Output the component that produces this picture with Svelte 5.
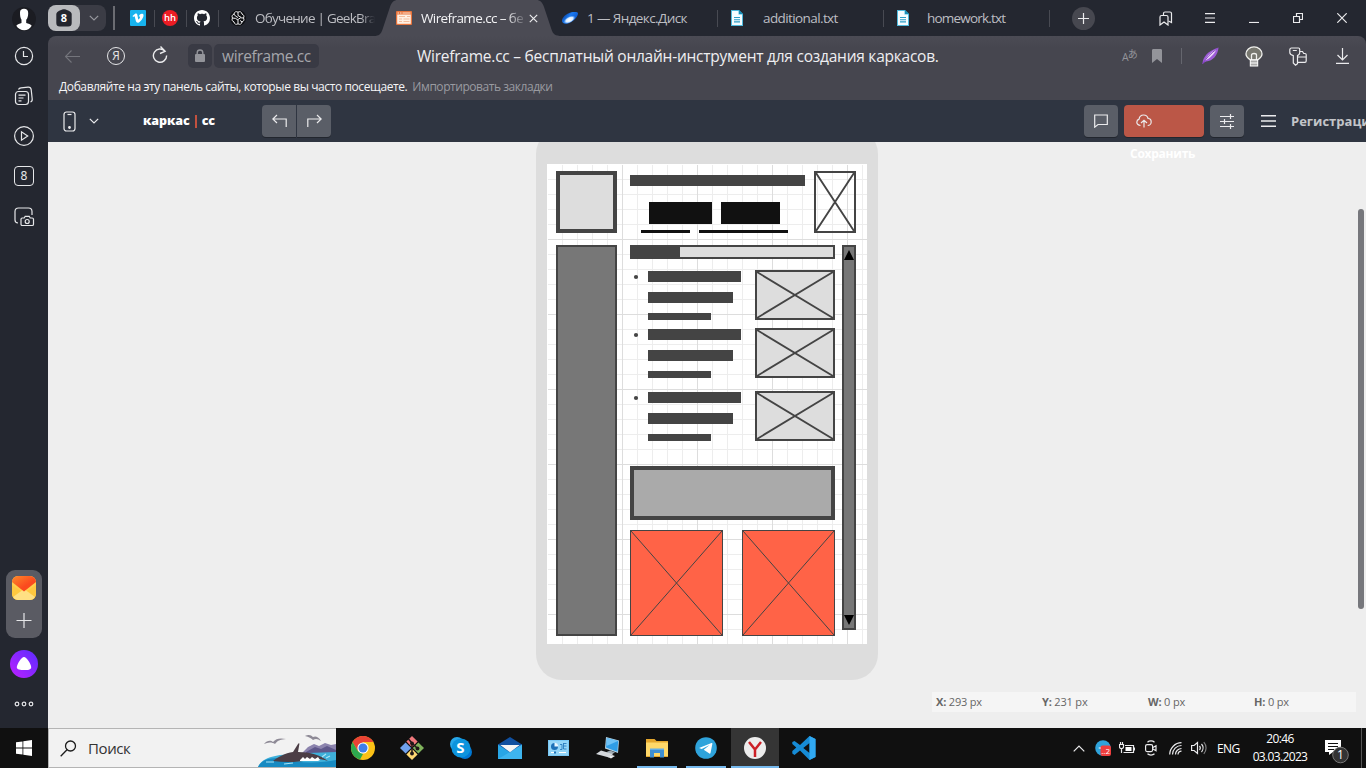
<script>
  const items = [0, 58, 121];
  const coords = [['X:', '293 px'], ['Y:', '231 px'], ['W:', '0 px'], ['H:', '0 px']];
</script>

{#snippet doc()}
  <svg class="doc" width="12" height="16" viewBox="0 0 12 16"><path d="M0 0h8l4 4v12H0z" fill="#4fb9dc"/><path d="M1 1h6.5v3.5H11V15H1z" fill="#f4fcff"/><path d="M8 0v4h4z" fill="#178eb8"/><path d="M3 7.5h6M3 9.7h6M3 11.9h6" stroke="#2a9cc6" stroke-width="1.1"/></svg>
{/snippet}

{#snippet crossed(x, y, w, h, fill, sw)}
  <rect x={x + sw / 2} y={y + sw / 2} width={w - sw} height={h - sw} {fill} stroke="#444" stroke-width={sw} />
  <path d={`M${x + sw} ${y + sw}L${x + w - sw} ${y + h - sw}M${x + w - sw} ${y + sw}L${x + sw} ${y + h - sw}`} stroke="#444" stroke-width={sw === 1 ? 1 : 1.9} />
{/snippet}

<div class="screen">
  <aside class="side">
    <svg class="avatar" width="24" height="24" viewBox="0 0 24 24"><circle cx="12" cy="12" r="12" fill="#1b1c22"/><path d="M8 5.500C8 2.800 9.500 1.700 12 1.700s4.200 1.300 4.200 4.200c0 3.200-.7 5.500-2 6.800v3.300c2 1 4.500 1 5.500 2.700-1.800 3-4.500 4.500-7.500 4.500S6 21.500 4.300 18.700c1-1.700 3.700-1.700 5.200-2.700v-3.300C8.300 11 8 8.500 8 5.500z" fill="#fff"/></svg>
    <svg class="s-clock" width="20" height="20" viewBox="0 0 20 20"><circle cx="10" cy="10" r="8.600"/><path d="M9.500 5v5.500H14"/></svg>
    <svg class="s-news" width="20" height="20" viewBox="0 0 20 20"><rect x="1.500" y="5.500" width="13" height="13" rx="3"/><path d="M4.500 3.500C5 2.300 6 2 7 1.900l7-.8c2-.2 3 .9 3.200 2.500l1 9.400c.2 1.500-.5 2.600-1.700 3M4.500 9.200h7M4.500 12h5M4.500 14.800h3"/></svg>
    <svg class="s-play" width="22" height="22" viewBox="0 0 22 22"><circle cx="11" cy="11" r="9.400"/><path d="M8.500 6.800v8.400l6.200-4.200z"/></svg>
    <div class="s-eight">8</div>
    <svg class="s-shot" width="22" height="22" viewBox="0 0 22 22"><path d="M5 17c-2-.1-3-1.200-3-3V5.500C2 3.200 3.200 2 5.500 2h10C17.800 2 19 3.200 19 5.500V9"/><path d="M8 13.200c0-.8.5-1.200 1.200-1.200h2l1-1.700h4l1 1.700h2c.8 0 1.300.4 1.300 1.200v5c0 .9-.5 1.300-1.300 1.300h-10c-.8 0-1.200-.4-1.200-1.300z"/><circle cx="14.200" cy="15.500" r="2"/></svg>
    <div class="mailpill">
      <svg width="24" height="24" viewBox="0 0 24 24" class="plain"><defs><linearGradient id="ml" x1="0" y1="0" x2="1" y2="1"><stop offset="0" stop-color="#ff8a2a"/><stop offset=".6" stop-color="#fb4a1e"/></linearGradient></defs><rect width="24" height="24" rx="6" fill="#ffcf4d"/><path d="M0 9l12 8 12-8v9a6 6 0 0 1-6 6H6a6 6 0 0 1-6-6z" fill="#ffc83f"/><path d="M1 21l11-8 11 8a6 6 0 0 1-5 3H6a6 6 0 0 1-5-3z" fill="#ffe083"/><path d="M0 6a6 6 0 0 1 6-6h12a6 6 0 0 1 6 6L12 15.500z" fill="url(#ml)"/></svg>
      <svg class="add" width="16" height="16" viewBox="0 0 16 16"><path d="M.500 8.500h15M8 1v15"/></svg>
    </div>
    <svg class="s-alice" width="28" height="28" viewBox="0 0 28 28"><defs><linearGradient id="al" x1="0" y1="1" x2="1" y2="0"><stop offset="0" stop-color="#bd20ff"/><stop offset="1" stop-color="#5a2cff"/></linearGradient></defs><circle cx="14" cy="14" r="14" fill="url(#al)" stroke="none"/><path d="M14 7c2.600 0 7.200 7.500 7.200 10.200S17.500 20 14 20s-7.200-.2-7.200-2.800S11.400 7 14 7z" fill="#fff" stroke="none"/></svg>
    <svg class="s-dots" width="20" height="6" viewBox="0 0 20 6"><circle cx="3" cy="3" r="1.800"/><circle cx="10" cy="3" r="1.800"/><circle cx="17" cy="3" r="1.800"/></svg>
  </aside>

  <div class="main">
    <div class="tabs">
      <div class="group"><div class="shield"><svg width="18" height="18" viewBox="0 0 18 18"><path d="M9 .300c2.500 0 7.700 2.700 7.700 4.700v9a3.500 3.500 0 0 1-3.500 3.500H4.800A3.500 3.500 0 0 1 1.300 14V5C1.300 3 6.500.300 9 .300z" fill="#24262e"/></svg><b>8</b></div><svg width="10" height="6" viewBox="0 0 10 6" class="line dim"><path d="M.800 .800L5 5 9.200.800"/></svg></div>
      <i class="div tall"></i>
      <svg class="vimeo" width="16" height="16" viewBox="0 0 16 16"><rect width="16" height="16" rx="1" fill="#17b3ee"/><path d="M2.500 6l2.600-2.200c1.200-.8 2-.2 2.300 1.100l.7 3.800c.3.900.7.900 1.200.1.700-1.100 1.100-2 .4-2.300-.3-.1-.7 0-1 .2.600-2.200 1.900-3.200 3.500-3 1.500.2 1.600 1.700 1 3.300-.8 2.200-3.300 5.200-4.800 5.700-1.200.4-2.200-.4-2.600-1.900L4.900 7.200c-.2-.8-.5-1.100-1-.8l-.8.500z" fill="#fff"/></svg>
      <i class="div"></i>
      <div class="hh">hh</div>
      <i class="div"></i>
      <svg class="gh" width="16" height="16" viewBox="0 0 16 16"><path fill="#fff" d="M8 0C3.580 0 0 3.580 0 8c0 3.540 2.290 6.530 5.470 7.590.4.070.55-.17.55-.38 0-.19-.01-.82-.01-1.490-2.010.37-2.530-.49-2.690-.94-.09-.23-.48-.94-.82-1.130-.28-.15-.68-.52-.01-.53.63-.01 1.080.58 1.230.82.72 1.210 1.870.87 2.330.66.070-.52.280-.87.510-1.070-1.780-.2-3.640-.89-3.640-3.950 0-.87.310-1.590.820-2.150-.08-.2-.36-1.020.08-2.120 0 0 .67-.21 2.200.82.640-.18 1.320-.27 2-.27s1.360.09 2 .27c1.530-1.040 2.200-.82 2.200-.82.440 1.100.16 1.920.08 2.120.51.56.82 1.270.82 2.150 0 3.070-1.870 3.750-3.650 3.950.29.25.54.73.54 1.480 0 1.070-.01 1.930-.01 2.200 0 .21.150.46.550.38A8.010 8.010 0 0 0 16 8c0-4.420-3.580-8-8-8z"/></svg>
      <i class="div"></i>
      <svg class="gpt" width="16" height="16" viewBox="0 0 16 16" fill="none" stroke="#f0f0f2" stroke-width="1"><circle cx="8" cy="8" r="8" fill="#0c0d10" stroke="none"/><path d="M8 2.200c1.600-1.200 4-.2 4 1.900 1.800.5 2.500 2.400 1.500 3.900 1 1.500.3 3.400-1.500 3.900 0 2.100-2.400 3.100-4 1.900-1.600 1.200-4 .2-4-1.900-1.800-.5-2.500-2.400-1.500-3.900-1-1.500-.3-3.400 1.500-3.900 0-2.100 2.400-3.100 4-1.900zM8 2.200v3.300l3 1.800M4 4.100l1.500 2L8 7.500M13.500 8l-3-.200L8 9.500M2.500 8l3 .400L8 10v3.800M12 11.900l-2-1.500"/></svg>
      <span class="t t-gb">Обучение | GeekBrains</span>
      <div class="active">
        <svg class="shape" width="188" height="36" viewBox="0 0 188 36"><path d="M0 36c5 0 7-2 8.500-6.500L16 7C17.700 2.200 19.500 0 24 0h138c4.500 0 6.300 2.200 8 7l7.500 22.500C179 34 181 36 188 36z" fill="#4b4b54"/></svg>
        <svg class="wf" width="16" height="14" viewBox="0 0 16 14"><rect width="16" height="14" rx="1" fill="#e8743c"/><path d="M1.200 3.500h13.600v9.300H1.200z" fill="#fff1e4"/><path d="M1.500 2h1.500M4 2h1.500M6.500 2h8" stroke="#ffe3d0" stroke-width="1.200"/><path d="M3 5.500h6M3 8h3M3 10.500h3M7.500 8h6M7.500 10.500h6M11 5.500h3" stroke="#f4bd9c" stroke-width="1"/></svg>
        <span class="t t-wf">Wireframe.cc – бесплатный</span>
        <svg class="line" width="9" height="9" viewBox="0 0 9 9"><path d="M.800 .800l7.400 7.400M8.200.800L.800 8.200"/></svg>
      </div>
      <svg class="disk" width="18" height="14" viewBox="0 0 18 14"><defs><linearGradient id="dk" x1="0" y1="0" x2="1" y2=".6"><stop offset="0" stop-color="#04256f"/><stop offset=".5" stop-color="#1c7af0"/><stop offset="1" stop-color="#0a52c8"/></linearGradient><radialGradient id="dw"><stop offset="0" stop-color="#fff"/><stop offset=".6" stop-color="#d8ebff"/><stop offset="1" stop-color="#6db4ff" stop-opacity="0"/></radialGradient></defs><path d="M1 9C2 5 7 1.500 12 1c3-.3 5 0 5 1.500 0 3.500-5 8.500-10 10C3.500 13.500.500 12 1 9z" fill="url(#dk)"/><ellipse cx="8.500" cy="8.700" rx="6.500" ry="3.200" fill="url(#dw)" transform="rotate(-28 8.500 8.700)"/></svg>
      <span class="t t-disk">1 — Яндекс.Диск</span>
      <i class="div d1"></i>{@render doc()}<span class="t t-add">additional.txt</span>
      <i class="div"></i>{@render doc()}<span class="t t-home">homework.txt</span>
      <i class="div"></i>
      <div class="plus"><svg class="line" width="11" height="11" viewBox="0 0 11 11"><path d="M0 5.500h11M5.500 0v11"/></svg></div>
      <svg class="line w1" width="14" height="15" viewBox="0 0 14 15"><path d="M1 6C1 5 1.500 4.500 2.500 4.500h5C8.500 4.500 9 5 9 6v8l-4-3-4 3z"/><path d="M4.500 4v-1.500C4.500 1.500 5 1 6 1h5c1 0 1.500.5 1.500 1.500V11.500l-3-1.500"/></svg>
      <svg class="line w2" width="10" height="10" viewBox="0 0 10 10"><path d="M0 .600h10M0 5h10M0 9.400h10"/></svg>
      <svg class="line w3" width="10" height="10" viewBox="0 0 10 10"><path d="M0 9.500h10"/></svg>
      <svg class="line w4" width="10" height="10" viewBox="0 0 10 10"><path d="M.500 3.500h6v6h-6zM3.500 3.500v-3h6v6h-3"/></svg>
      <svg class="line w5" width="10" height="10" viewBox="0 0 10 10"><path d="M.300.300l9.400 9.400M9.700.300L.300 9.700"/></svg>
    </div>

    <div class="bar">
      <svg class="b-back" width="15" height="13" viewBox="0 0 15 13"><path d="M6.500.500l-6 6 6 6M.500 6.500H15"/></svg>
      <div class="ya">Я</div>
      <svg class="line b-re" width="16" height="18" viewBox="0 0 16 18"><path d="M13 5.300A6.600 6.600 0 1 0 14.600 9.500M8.500.500l4.600 4.800L8 7.500" stroke-width="1.400"/></svg>
      <div class="lock"><svg width="10" height="14" viewBox="0 0 10 14"><rect y="5" width="10" height="8" rx="1" fill="#93949a"/><path d="M2.200 5.500V3.800a2.800 2.800 0 0 1 5.600 0v1.700" fill="none" stroke="#93949a" stroke-width="1.400"/></svg></div>
      <div class="url"><span>wireframe.cc</span></div>
      <div class="ptitle"><span>Wireframe.cc – бесплатный онлайн-инструмент для создания каркасов.</span></div>
      <div class="trans"><span>A</span><sup>あ</sup></div>
      <svg class="b-mark" width="10" height="14" viewBox="0 0 10 14"><path d="M0 1.500C0 .500.500 0 1.500 0h7c1 0 1.500.500 1.500 1.500V14L5 10l-5 4z" fill="#93949a"/></svg>
      <i class="div"></i>
      <svg class="b-fea" width="17" height="18" viewBox="0 0 17 18"><path d="M.500 16.500C1 10 5 4.500 16.500.500 16 8 11 14 4 14.500z" fill="#9c5bd6"/><path d="M2.500 13.500C5.500 8 10 4 15 2 12 7 8 12 2.500 13.500z" fill="#ead7f7"/><path d="M.500 17C4 11 9 6 15.500 1.500" stroke="#8440c4" fill="none"/></svg>
      <svg class="b-bulb" width="18" height="21" viewBox="0 0 18 21"><path d="M5.500 14C2.500 12 1 10.500 1 8a8 7.200 0 0 1 16 0c0 2.500-1.500 4-4.500 6z" fill="#77776f" stroke="#f1f1ee" stroke-width="1.300"/><path d="M6.500 15V9c0-2 5-2 5 0v6" fill="none" stroke="#f1f1ee" stroke-width="1.300"/><rect x="5.300" y="14" width="7.400" height="6" fill="#aaa" stroke="#fff"/><path d="M5 17h8" stroke="#fff"/></svg>
      <svg class="line b-key" width="18" height="19" viewBox="0 0 18 19"><path d="M2.500 1h7c.8 0 1.200.500 1.200 1.200V6c0 1.300-1 2-2.200 2.600v8l-2 1.600L4.300 16V8.600C2 8 .800 7 .800 5.500V3c0-1.200.6-2 1.700-2zM3.800 3.500h4M11 4.500h2.500l1.200 2h1.300c.8 0 1.200.5 1.200 1.200V14c0 .8-.5 1.300-1.300 1.300H9M9 10h8"/></svg>
      <svg class="line b-dl" width="13" height="16" viewBox="0 0 13 16"><path d="M6.500 0v12M1.500 7l5 5 5-5M0 15.300h13"/></svg>
    </div>

    <div class="marks"><span class="m1">Добавляйте на эту панель сайты, которые вы часто посещаете.</span><span class="m2">Импортировать закладки</span></div>

    <div class="app">
      <svg class="line a-ph" width="13" height="21" viewBox="0 0 13 21"><rect x="1" y="1" width="11" height="19" rx="2.500"/><path d="M4.500 3.500h4"/><circle cx="6.500" cy="16.500" r=".8" fill="#e4e5e7"/></svg>
      <svg class="line a-ch" width="10" height="6" viewBox="0 0 10 6"><path d="M.800.800L5 5 9.200.800"/></svg>
      <div class="logo"><span>каркас</span><i></i><span>cc</span></div>
      <div class="undo">
        <button aria-label="Undo"><svg class="line" width="15" height="14" viewBox="0 0 15 14"><path d="M5 1L.800 5 5 9M.800 5h13.400v8"/></svg></button>
        <button aria-label="Redo"><svg class="line" width="15" height="14" viewBox="0 0 15 14"><path d="M10 1l4.200 4L10 9M14.200 5H.800v8"/></svg></button>
      </div>
      <button class="sq c" aria-label="Comments"><svg class="line" width="14" height="14" viewBox="0 0 14 14"><path d="M.700 1h12.600v9.500H4L.700 13.200z"/></svg></button>
      <button class="save"><svg class="line" width="16" height="14" viewBox="0 0 16 14"><path d="M4.500 11.500C2.500 11.500.800 10 .800 8.200c0-1.500 1-2.700 2.300-3.100C3.400 2.700 5.200 1 7.600 1c2.200 0 4 1.500 4.500 3.500 1.900.1 3.100 1.500 3.100 3.400s-1.500 3.600-3.500 3.600M8 13.500V6.500M5 9l3-2.800L11 9"/></svg><span>Сохранить</span></button>
      <button class="sq s" aria-label="Settings"><svg class="line" width="14" height="15" viewBox="0 0 14 15"><path d="M0 2.500h14M0 7.500h14M0 12.500h14M10.500 0v5M4.500 5v5M10.500 10v5"/></svg></button>
      <svg class="line a-mn" width="15" height="12" viewBox="0 0 15 12"><path d="M0 .800h15M0 6h15M0 11.200h15" stroke-width="1.500"/></svg>
      <span class="reg">Регистрация</span>
    </div>

    <div class="work">
      <div class="device">
        <svg class="paper" width="320" height="480" viewBox="0 0 320 480" fill="none">
          {#each items as dy}
            <circle cx="89" cy={113 + dy} r="2.100" fill="#444" />
            <path d={`M101 ${107 + dy}h93v11h-93zM101 ${128 + dy}h85v11h-85zM101 ${149 + dy}h63v7h-63z`} fill="#444" />
            {@render crossed(208, 106 + dy, 80, 50, '#ddd', 2)}
          {/each}
          <rect x="11" y="9" width="57" height="58" fill="#ddd" stroke="#444" stroke-width="4" />
          <rect x="83" y="11" width="175" height="11" fill="#444" />
          <path d="M102 38h63v22h-63zM174 38h59v22h-59zM94 66h49v3H94zM152 66h89v3h-89z" fill="#111" />
          {@render crossed(267, 7, 42, 62, 'none', 2)}
          <rect x="10" y="82" width="59" height="389" fill="#777" stroke="#444" stroke-width="2" />
          <rect x="84" y="82" width="203" height="12" fill="#ddd" stroke="#444" stroke-width="2" />
          <rect x="83" y="81" width="50" height="14" fill="#444" />
          <rect x="296" y="82" width="12" height="383" fill="#777" stroke="#444" stroke-width="2" />
          <path d="M302 86l5 10h-10zM302 461l5-10h-10z" fill="#000" />
          <rect x="85" y="304" width="201" height="50" fill="#aaa" stroke="#444" stroke-width="4" />
          {@render crossed(83, 366, 93, 106, '#ff6347', 1)}
          {@render crossed(195, 366, 93, 106, '#ff6347', 1)}
        </svg>
      </div>
      <div class="coords">{#each coords as [k, v]}<span><b>{k}</b> {v}</span>{/each}</div>
      <i class="thumb"></i>
    </div>
  </div>

  <footer class="task">
    <div class="start"><svg width="16" height="16" viewBox="0 0 16 16" fill="#fff"><path d="M0 2.300l6.500-.9v6.200H0zM7.300 1.300L16 0v7.600H7.300zM0 8.400h6.500v6.200L0 13.700zM7.300 8.400H16V16l-8.700-1.300z"/></svg></div>
    <div class="search">
      <svg width="17" height="17" viewBox="0 0 17 17" fill="none" stroke="#1c1c1c" stroke-width="1.300"><circle cx="10.500" cy="6" r="5"/><path d="M7 9.800L.700 16.300"/></svg>
      <span>Поиск</span>
      <svg class="whale" width="78" height="38" viewBox="0 0 78 38"><path d="M44 24l6-6 6-3 5 2 6-3 6 2 5-1v12H44z" fill="#8b83ad"/><path d="M48 23l9-5 6 2 6-3 9 4v7H48z" fill="#5e578a"/><path d="M0 38c3-7 10-10 22-12l28-2 28-1v15z" fill="#3fb0da"/><path d="M0 38c4-8 12-9 22-9 20 6 40 5 56 2v7z" fill="#178ac2"/><path d="M15 32c5-4 12-8 20-9l5-8c.8-1.200 1.600-.7 1.300.5L40 23c12 0 22 3 30 9-10-3-12-2-17-1-13 2-25 3-38 1z" fill="#4b3d45"/><path d="M42 31l3-3 2 2 2-2 3 2 2-2 3 2 3-2 2 3-2 1H42z" fill="#fff"/><path d="M6 15c3-4 7-4 9-2 3-4 8-4 13-3-5 .6-8 1-11 5-3-2-7-2-11 0zM47 7c4-2 6-1 8 1 2-1 5-1 8 4-3-2-5-3-8-1-2-2-4-3-8-4z" fill="#8e8a96"/><path d="M8 33h8M64 28l4-3M68 29l4-2M26 35l9-1" stroke="#a9e4f5" stroke-width="1.200"/></svg>
    </div>
    <nav class="apps">
      <div><svg width="24" height="24" viewBox="0 0 24 24"><circle cx="12" cy="12" r="12" fill="#fbc116"/><path d="M1.600 6A12 12 0 0 1 22.400 6H12L6.800 15z" fill="#ea4335"/><path d="M1.600 6l5.200 9 5.200 3-3 5.600A12 12 0 0 1 1.600 6z" fill="#2da94f"/><circle cx="12" cy="12" r="5.600" fill="#fff"/><circle cx="12" cy="12" r="4.500" fill="#3f7ee8"/></svg></div>
      <div><svg width="24" height="24" viewBox="0 0 24 24"><path d="M12 0l5.600 5.600L12 11.200 6.400 5.600z" fill="#f0797d"/><path d="M18.400 6.400L24 12l-5.600 5.600-5.600-5.600z" fill="#80b35c"/><path d="M12 12.800l5.600 5.600L12 24l-5.600-5.600z" fill="#ffd873"/><path d="M5.600 6.400l5.600 5.600-5.600 5.600L0 12z" fill="#70a1ee"/><path d="M8.500 3l3.500 4v11M12 7l5.500 5.500" stroke="#201719" stroke-width="1.500" fill="none"/><circle cx="12" cy="7.300" r="1.900" fill="#201719"/><circle cx="12" cy="17.500" r="1.900" fill="#201719"/><circle cx="17.500" cy="12.500" r="1.900" fill="#201719"/></svg></div>
      <div><div class="skype"><svg width="22" height="22" viewBox="0 0 22 22"><circle cx="7" cy="7" r="7" fill="#28a8ea"/><circle cx="15" cy="15" r="7" fill="#0078d4"/><circle cx="11" cy="11" r="9.500" fill="#0d94dd"/></svg><b>S</b></div></div>
      <div><svg width="24" height="22" viewBox="0 0 24 22"><path d="M0 7.500L12 0l12 7.500V15H0z" fill="#1050a0"/><path d="M0 7.500l12 8 12-8V22H0z" fill="#28a6e6"/><path d="M24 7.500V22H0l12-7z" fill="#4dc0f5" opacity=".6"/><path d="M2.300 8h19.400L12 15.300z" fill="#f4f5f5"/></svg></div>
      <div><svg width="21" height="16" viewBox="0 0 21 16"><rect width="21" height="16" fill="#79c8f5"/><rect x="1" y="1" width="19" height="14" fill="#93d5f8"/><circle cx="6.500" cy="6.500" r="3.500" fill="#1d71b8"/><path d="M6.500 6.500V2.700a3.800 3.800 0 0 1 3.800 3.800z" fill="#e9f7ff"/><path d="M12 4.500h2v5h-2M15.500 3.500h3M15.500 6h3M15.500 9h3M15.500 3v6" stroke="#1d71b8" fill="none" stroke-width=".8"/><path d="M3 12.500h5M11 12.500h7" stroke="#fff"/><path d="M6 11.500h2v2H6z" fill="#1d71b8"/></svg></div>
      <div><svg width="24" height="22" viewBox="0 0 24 22"><path d="M10 0l13 3.500-1 12.500-13-4.500z" fill="#b9d5e4"/><path d="M10.800 1l11.400 3-.8 10.800L10 10.500z" fill="#2f9de6"/><path d="M11 1l11 3-11.500 5z" fill="#6fc2f5"/><path d="M14 13.500l5 1.700-3 2-6-2z" fill="#9eaab2"/><path d="M5 13.500l12 3.500-4 3.500L0 17z" fill="#d4d8dc"/><path d="M12 20l4-2 3 1-4 2.500z" fill="#e6e9ea"/></svg></div>
      <div class="run"><svg width="22" height="20" viewBox="0 0 22 20"><path d="M0 1h8.500l2 2H22v16H0z" fill="#e4a62d"/><path d="M0 4.500h22V18H0z" fill="#ffd869"/><path d="M4 19.500V11h14v8.500h-4V15H8v4.500z" fill="#3f8fd2"/><path d="M4 10.500h14v1.500H4z" fill="#62aee8"/></svg></div>
      <div class="run"><svg width="22" height="22" viewBox="0 0 22 22"><circle cx="11" cy="11" r="10.800" fill="#2fa3db"/><path d="M4 11l12.500-5c.6-.2 1 .1.900.8L15.500 16c-.2.700-.6.900-1.100.500L8.700 12.800l6-4.800-8 4z" fill="#fff"/></svg></div>
      <div class="run on"><svg width="22" height="22" viewBox="0 0 22 22"><circle cx="11" cy="11" r="11" fill="#ececec"/><path d="M5 5l6 7.500V20M17 5l-6 7.500" fill="none" stroke="#cc2027" stroke-width="2.500"/></svg></div>
      <div><svg width="24" height="24" viewBox="0 0 24 24"><path d="M17.500 0L23.500 3v18l-6 3L8 14.500 2.500 19 .300 17.500V15l4-3.500L.300 8V6L2.500 5 8 9zM17.500 7L11.300 12l6.200 5z" fill="#168bd5"/><path d="M17.500 0L23.500 3v18l-6 3z" fill="#31a9f2"/></svg></div>
    </nav>
    <div class="tray">
      <svg class="line" width="12" height="7" viewBox="0 0 12 7"><path d="M.700 6.300L6 1l5.300 5.300"/></svg>
      <div class="tg"><svg width="16" height="16" viewBox="0 0 16 16"><circle cx="8" cy="8" r="7.800" fill="#2fa3db"/><path d="M3 8l3-1v2z" fill="#fff"/><rect x="5.500" y="5.500" width="10.500" height="10.500" rx="2" fill="#ee3e3e"/></svg><span>..2</span></div>
      <svg class="line bat" width="16" height="12" viewBox="0 0 16 12"><path d="M6 3.500h8.500v7H4.500M2.500 7v4M.500 2.500h4v2.200c0 1.200-.7 2-2 2s-2-.8-2-2zM1.500 0v2.500M3.500 0v2.500M15.500 5.500v3"/><path d="M6.500 5h6v4h-6z" fill="#fff" stroke="none"/></svg>
      <svg class="line cam" width="12" height="16" viewBox="0 0 12 16"><rect x=".6" y="4.600" width="7" height="7" rx="1.500"/><path d="M8 7.500l3-1.800v5L8 9M2.500 2.200C4.300.500 7.700.500 9.500 2.200M2.500 13.800c1.800 1.700 5.200 1.700 7 0"/></svg>
      <svg class="line wifi" width="14" height="13" viewBox="0 0 14 13"><path d="M.700 12.500A12 12 0 0 1 12.500.700M3.500 12.500a9 9 0 0 1 9-9M6.500 12.500a6 6 0 0 1 6-6M9 12.500a3.500 3.500 0 0 1 3.500-3.300"/></svg>
      <svg class="line vol" width="16" height="14" viewBox="0 0 16 14"><path d="M.600 4.500h2.500L6.500 1.500v11L3.100 9.500H.600zM8.500 5c1 1.200 1 2.800 0 4M10.500 3c2 2.300 2 5.700 0 8"/><path d="M12.800 1.200c3 3.300 3 8.300 0 11.600" opacity=".5"/></svg>
      <span class="eng">ENG</span>
      <div class="clock"><span>20:46</span><span class="date">03.03.2023</span></div>
      <div class="note"><svg width="24" height="24" viewBox="0 0 24 24"><path d="M0 0h16v12H8l-4 3v-3H0z" fill="#fff"/><path d="M3 3.500h10M3 6.500h10M3 9.500h6" stroke="#111"/><circle cx="15.500" cy="15" r="7.800" fill="#333" stroke="#777"/></svg><span>1</span></div>
      <i class="edge"></i>
    </div>
  </footer>
</div>

<style>
  :global(body) { margin: 0; overflow: hidden; }
  .screen { width: 1366px; height: 768px; display: grid; grid-template: 728px 40px / 48px 1318px; overflow: hidden; background: #242730; font-family: "Open Sans", "Noto Sans", sans-serif; }
  svg { display: block; flex: none; }
  span { white-space: nowrap; }
  button { border: 0; padding: 0; margin: 0; font: inherit; color: inherit; }
  .line { fill: none; stroke: #ebebed; stroke-width: 1.2; }
  .dim { stroke: #97989e; }

  .side { display: flex; flex-direction: column; align-items: center; }
  .side svg { fill: none; stroke: #e6e7e9; stroke-width: 1.2; }
  .side .plain, .side .avatar { stroke: none; }
  .avatar { margin-top: 7px; }
  .s-clock { margin-top: 15px; }
  .s-news { margin-top: 20px; }
  .s-play { margin-top: 19px; }
  .s-eight { box-sizing: border-box; width: 20px; height: 20px; margin-top: 19px; border: 1.3px solid #e6e7e9; border-radius: 4px; color: #e6e7e9; font: 12px/17px "Noto Sans", sans-serif; text-align: center; }
  .s-shot { margin-top: 20px; }
  .mailpill { box-sizing: border-box; width: 36px; height: 68px; margin-top: 342px; padding-top: 6px; display: flex; flex-direction: column; align-items: center; gap: 12px; background: #5a5b63; border-radius: 9px; }
  .s-alice { margin-top: 12px; }
  .s-dots { margin-top: 23px; }

  .main { display: flex; flex-direction: column; min-width: 0; }
  .tabs { height: 36px; display: flex; align-items: center; flex: none; }
  .tabs > * { flex: none; }
  .group { width: 58px; height: 26px; display: flex; align-items: center; border-radius: 8px; background: #3b3c45; margin-right: 7px; gap: 9px; }
  .shield { position: relative; width: 32px; height: 26px; display: grid; place-items: center; background: #b9babd; border-radius: 8px; }
  .shield b { position: absolute; font-size: 11px; line-height: 26px; color: #fff; }
  .div { width: 1px; height: 17px; background: #484a52; }
  .div.tall { width: 2px; height: 24px; background: #6b6c72; margin-right: 15px; }
  .vimeo, .hh, .gh { margin-right: 8px; }
  .hh { margin-left: 7px; width: 16px; height: 16px; border-radius: 50%; background: #ed1c24; color: #fff; font: 600 9.5px/15px "Open Sans"; text-align: center; }
  .gh { margin-left: 7px; }
  .gpt { margin-left: 11px; }
  .t { font-size: 13.5px; line-height: 20px; color: #bdbec3; overflow: hidden; }
  .t-gb { margin-left: 9px; width: 120px; letter-spacing: -.75px; mask-image: linear-gradient(90deg, #000 88%, transparent); }
  .active { position: relative; width: 188px; height: 36px; margin-left: -1px; display: flex; align-items: center; margin-right: -1px; }
  .shape { position: absolute; inset: 0; }
  .wf { position: relative; margin-left: 22px; }
  .t-wf { position: relative; margin: 0 6px 0 9px; width: 102px; color: #f3f3f5; letter-spacing: -.6px; mask-image: linear-gradient(90deg, #000 84%, transparent 104%); }
  .active .line { position: relative; }
  .t-disk { margin-left: 8px; width: 130px; letter-spacing: -.6px; }
  .doc { margin-left: 13px; }
  .t-add, .t-home { margin-left: 20px; width: 120px; letter-spacing: -.6px; }
  .t-home { margin-left: 18px; width: 122px; letter-spacing: -.8px; }
  .plus { width: 23px; height: 23px; margin-left: 22px; border-radius: 50%; background: #474850; display: grid; place-items: center; }
  .w1 { margin-left: 64px; } .w2 { margin-left: 32px; } .w3, .w4, .w5 { margin-left: 34px; }

  .bar { height: 40px; flex: none; display: flex; align-items: center; background: linear-gradient(#4b4b54, #46464f 12px); border-radius: 8px 8px 0 0; }
  .b-back { margin-left: 17px; fill: none; stroke: #74757c; stroke-width: 1.1; }
  .ya { box-sizing: border-box; margin-left: 27px; width: 18px; height: 18px; border: 1.3px solid #e6e7e9; border-radius: 50%; color: #e6e7e9; font: 12px/15px "Open Sans"; text-align: center; }
  .b-re { margin-left: 27px; margin-top: -2px; }
  .lock { margin-left: 20px; width: 24px; height: 24px; background: #393a44; border-radius: 5px; display: grid; place-items: center; }
  .url { margin-left: 2px; width: 105px; height: 24px; background: #393a44; border-radius: 5px; color: #a5a6ab; font-size: 15.5px; line-height: 24px; text-indent: 8px; letter-spacing: -.35px; }
  .ptitle { margin-left: 98px; width: 560px; color: #eeeef1; font-size: 15.5px; }
  .ptitle span { letter-spacing: -.24px; }
  .trans { margin-left: 145px; width: 17px; height: 20px; color: #93949a; font: 10.5px/22px "Open Sans", "Noto Sans CJK JP"; display: flex; }
  .trans sup { font-size: 10px; line-height: 17px; margin-left: -1px; vertical-align: baseline; }
  .b-mark { margin-left: 13px; }
  .bar .div { margin-left: 19px; background: #65666e; height: 16px; }
  .b-fea { margin-left: 20px; } .b-bulb { margin-left: 26px; } .b-key { margin-left: 26px; } .b-dl { margin-left: 29px; }

  .marks { height: 24px; flex: none; display: flex; align-items: center; gap: 5px; padding-left: 11px; background: #46464f; font-size: 12px; color: #f5f5f7; }
  .marks span { line-height: 16px; padding-bottom: 2px; }
  .m1 { letter-spacing: -.4px; }
  .m2 { color: #9a9ba1; letter-spacing: -.45px; }

  .app { position: relative; z-index: 1; height: 42px; flex: none; display: flex; align-items: center; background: #2f3541; }
  .app > * { flex: none; }
  .a-ph { margin-left: 15px; } .a-ch { margin-left: 13px; }
  .logo { margin-left: 44px; width: 119px; display: flex; align-items: center; gap: 5px; color: #fff; font-size: 12.5px; font-weight: 800; line-height: 18px; letter-spacing: -.1px; }
  .logo i { width: 2px; height: 13px; background: #c2513f; }
  .undo { display: flex; gap: 1px; margin-right: 753px; }
  .undo button, .sq { width: 34px; height: 32px; display: grid; place-items: center; background: #5a5e67; border-radius: 4px; box-shadow: 0 1px 0 #22262e; }
  .undo button:first-child { border-radius: 4px 0 0 4px; }
  .undo button:last-child { border-radius: 0 4px 4px 0; }
  .save { position: relative; width: 80px; height: 32px; margin: 0 6px; padding-left: 12px; background: #bb5747; border-radius: 4px; box-shadow: 0 1px 0 #22262e; }
  .save span { position: absolute; left: 6px; top: 40px; color: #fff; font-size: 12px; font-weight: 700; line-height: 17px; letter-spacing: -.25px; }
  .a-mn { margin-left: 17px; }
  .reg { margin-left: 15px; color: #c3c5c9; font-size: 13px; font-weight: 700; }

  .work { position: relative; height: 586px; overflow: hidden; background: #eee; }
  .device { width: 320px; margin: -14px 0 0 488px; padding: 36px 11px; background: #ddd; border-radius: 26px; }
  .paper { background-color: #fff; background-image: linear-gradient(#ddd 1px, transparent 1px), linear-gradient(90deg, #ddd 1px, transparent 1px), linear-gradient(#ededed 1px, transparent 1px), linear-gradient(90deg, #ededed 1px, transparent 1px); background-size: 75px 75px, 75px 75px, 15px 15px, 15px 15px; box-shadow: inset 1px 1px #fff; }
  .coords { position: absolute; left: 884px; top: 550px; width: 424px; height: 20px; display: grid; grid-template-columns: repeat(4, 106px); background: #f5f5f5; color: #666; font-size: 11px; line-height: 20px; }
  .coords span { padding-left: 4px; letter-spacing: -.18px; }
  .thumb { position: absolute; right: 2px; top: 67px; width: 6px; height: 400px; border-radius: 3px; background: #76777c; }

  .task { grid-column: 1 / 3; display: flex; background: #101010; color: #fff; }
  .start { width: 48px; display: grid; place-items: center; }
  .search { box-sizing: border-box; width: 288px; display: flex; align-items: center; padding-left: 11px; background: #f2f2f2; border: 1px solid #b4b4b4; border-right: 0; color: #333; font-size: 15px; }
  .search span { margin-left: 11px; width: 119px; letter-spacing: -.4px; }
  .whale { margin-left: 51px; }
  .apps { display: flex; margin-left: 2px; }
  .apps > div { width: 49px; display: grid; place-items: center; }
  .apps .run { background: linear-gradient(#76b9ed, #76b9ed) center bottom / 40px 2px no-repeat; }
  .apps .on { background: linear-gradient(#76b9ed, #76b9ed) center bottom / 48px 2px no-repeat, linear-gradient(#353535, #353535) center / 48px 40px no-repeat; }
  .skype { position: relative; }
  .skype b { position: absolute; inset: 0; text-align: center; font-size: 15px; line-height: 21px; }
  .tray { margin-left: 245px; display: flex; align-items: center; }
  .tray > * { flex: none; }
  .tg { position: relative; margin-left: 10px; }
  .tg span { position: absolute; right: 1px; bottom: 0; font-size: 8px; line-height: 10px; }
  .bat { margin-left: 8px; } .cam { margin-left: 10px; } .wifi { margin-left: 12px; } .vol { margin-left: 8px; }
  .eng { margin-left: 10px; width: 24px; font-size: 12px; letter-spacing: -.6px; }
  .clock { margin-left: 4px; width: 70px; display: flex; flex-direction: column; align-items: center; font-size: 12px; line-height: 18px; letter-spacing: -.65px; }
  .note { position: relative; margin-left: 10px; margin-top: 8px; }
  .note span { position: absolute; left: 12px; top: 7px; font-size: 12px; line-height: 16px; }
  .edge { margin-left: 12px; width: 1px; height: 40px; background: #555; }
</style>
